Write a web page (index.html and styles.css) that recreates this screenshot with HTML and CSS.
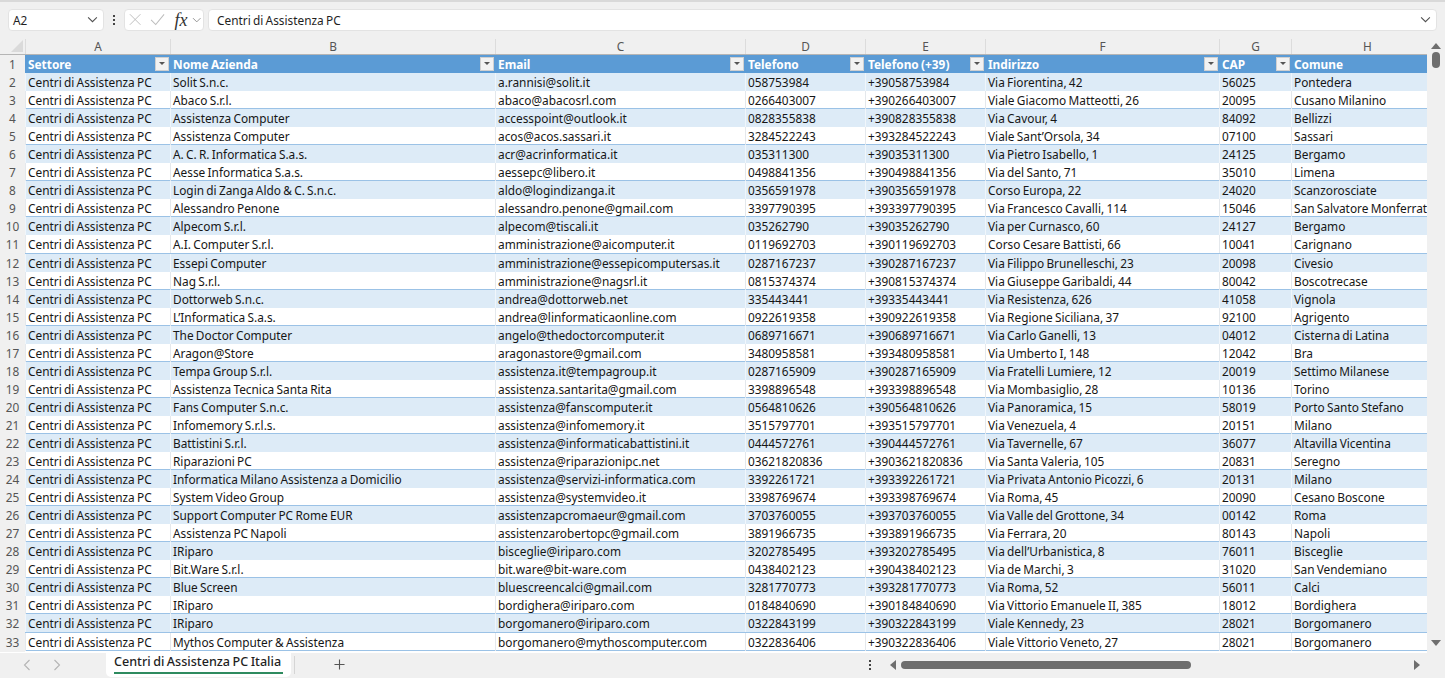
FILE: index.html
```html
<!DOCTYPE html>
<html lang="it">
<head>
    <meta charset="UTF-8">
    <title>Centri di Assistenza PC Italia</title>
    <link rel="stylesheet" href="styles.css">
</head>
<body>
    <div class="formula-bar">
        <div class="name-box">
            <span>A2</span>
            <svg class="chev" viewBox="0 0 12 8"><path d="M1 1.5l5 5 5-5"/></svg>
        </div>
        <div class="dots"><i></i><i></i><i></i></div>
        <div class="fx-box">
            <svg class="fx-icon" viewBox="0 0 14 14"><path d="M1 1l12 12M13 1L1 13"/></svg>
            <svg class="fx-icon" viewBox="0 0 16 14"><path d="M1 7.5l5 5L15 1.5"/></svg>
            <span class="fx">fx</span>
            <svg class="chev small" viewBox="0 0 12 8"><path d="M1 1.5l5 5 5-5"/></svg>
        </div>
        <div class="formula-input">
            <span>Centri di Assistenza PC</span>
            <svg class="chev" viewBox="0 0 12 8"><path d="M1 1.5l5 5 5-5"/></svg>
        </div>
    </div>

    <div class="sheet-area">
        <div class="sheet">
            <div class="col-heads">
                <div class="corner"><svg viewBox="0 0 12 12"><path d="M12 0v12H0z"/></svg></div>
                <div>A</div><div>B</div><div>C</div><div>D</div><div>E</div><div>F</div><div>G</div><div>H</div>
            </div>
            <div class="rows">
                <div class="row head">
                    <div class="num">1</div>
                    <div class="cell">Settore<b class="filter"></b></div>
                    <div class="cell">Nome Azienda<b class="filter"></b></div>
                    <div class="cell">Email<b class="filter"></b></div>
                    <div class="cell">Telefono<b class="filter"></b></div>
                    <div class="cell">Telefono (+39)<b class="filter"></b></div>
                    <div class="cell">Indirizzo<b class="filter"></b></div>
                    <div class="cell">CAP<b class="filter"></b></div>
                    <div class="cell">Comune</div>
                </div>
                <div class="row"><div class="num">2</div><div class="cell">Centri di Assistenza PC</div><div class="cell">Solit S.n.c.</div><div class="cell">a.rannisi@solit.it</div><div class="cell">058753984</div><div class="cell">+39058753984</div><div class="cell">Via Fiorentina, 42</div><div class="cell">56025</div><div class="cell">Pontedera</div></div>
                <div class="row"><div class="num">3</div><div class="cell">Centri di Assistenza PC</div><div class="cell">Abaco S.r.l.</div><div class="cell">abaco@abacosrl.com</div><div class="cell">0266403007</div><div class="cell">+390266403007</div><div class="cell">Viale Giacomo Matteotti, 26</div><div class="cell">20095</div><div class="cell">Cusano Milanino</div></div>
                <div class="row"><div class="num">4</div><div class="cell">Centri di Assistenza PC</div><div class="cell">Assistenza Computer</div><div class="cell">accesspoint@outlook.it</div><div class="cell">0828355838</div><div class="cell">+390828355838</div><div class="cell">Via Cavour, 4</div><div class="cell">84092</div><div class="cell">Bellizzi</div></div>
                <div class="row"><div class="num">5</div><div class="cell">Centri di Assistenza PC</div><div class="cell">Assistenza Computer</div><div class="cell">acos@acos.sassari.it</div><div class="cell">3284522243</div><div class="cell">+393284522243</div><div class="cell">Viale Sant’Orsola, 34</div><div class="cell">07100</div><div class="cell">Sassari</div></div>
                <div class="row"><div class="num">6</div><div class="cell">Centri di Assistenza PC</div><div class="cell">A. C. R. Informatica S.a.s.</div><div class="cell">acr@acrinformatica.it</div><div class="cell">035311300</div><div class="cell">+39035311300</div><div class="cell">Via Pietro Isabello, 1</div><div class="cell">24125</div><div class="cell">Bergamo</div></div>
                <div class="row"><div class="num">7</div><div class="cell">Centri di Assistenza PC</div><div class="cell">Aesse Informatica S.a.s.</div><div class="cell">aessepc@libero.it</div><div class="cell">0498841356</div><div class="cell">+390498841356</div><div class="cell">Via del Santo, 71</div><div class="cell">35010</div><div class="cell">Limena</div></div>
                <div class="row"><div class="num">8</div><div class="cell">Centri di Assistenza PC</div><div class="cell">Login di Zanga Aldo &amp; C. S.n.c.</div><div class="cell">aldo@logindizanga.it</div><div class="cell">0356591978</div><div class="cell">+390356591978</div><div class="cell">Corso Europa, 22</div><div class="cell">24020</div><div class="cell">Scanzorosciate</div></div>
                <div class="row"><div class="num">9</div><div class="cell">Centri di Assistenza PC</div><div class="cell">Alessandro Penone</div><div class="cell">alessandro.penone@gmail.com</div><div class="cell">3397790395</div><div class="cell">+393397790395</div><div class="cell">Via Francesco Cavalli, 114</div><div class="cell">15046</div><div class="cell">San Salvatore Monferrato</div></div>
                <div class="row"><div class="num">10</div><div class="cell">Centri di Assistenza PC</div><div class="cell">Alpecom S.r.l.</div><div class="cell">alpecom@tiscali.it</div><div class="cell">035262790</div><div class="cell">+39035262790</div><div class="cell">Via per Curnasco, 60</div><div class="cell">24127</div><div class="cell">Bergamo</div></div>
                <div class="row"><div class="num">11</div><div class="cell">Centri di Assistenza PC</div><div class="cell">A.I. Computer S.r.l.</div><div class="cell">amministrazione@aicomputer.it</div><div class="cell">0119692703</div><div class="cell">+390119692703</div><div class="cell">Corso Cesare Battisti, 66</div><div class="cell">10041</div><div class="cell">Carignano</div></div>
                <div class="row"><div class="num">12</div><div class="cell">Centri di Assistenza PC</div><div class="cell">Essepi Computer</div><div class="cell">amministrazione@essepicomputersas.it</div><div class="cell">0287167237</div><div class="cell">+390287167237</div><div class="cell">Via Filippo Brunelleschi, 23</div><div class="cell">20098</div><div class="cell">Civesio</div></div>
                <div class="row"><div class="num">13</div><div class="cell">Centri di Assistenza PC</div><div class="cell">Nag S.r.l.</div><div class="cell">amministrazione@nagsrl.it</div><div class="cell">0815374374</div><div class="cell">+390815374374</div><div class="cell">Via Giuseppe Garibaldi, 44</div><div class="cell">80042</div><div class="cell">Boscotrecase</div></div>
                <div class="row"><div class="num">14</div><div class="cell">Centri di Assistenza PC</div><div class="cell">Dottorweb S.n.c.</div><div class="cell">andrea@dottorweb.net</div><div class="cell">335443441</div><div class="cell">+39335443441</div><div class="cell">Via Resistenza, 626</div><div class="cell">41058</div><div class="cell">Vignola</div></div>
                <div class="row"><div class="num">15</div><div class="cell">Centri di Assistenza PC</div><div class="cell">L’Informatica S.a.s.</div><div class="cell">andrea@linformaticaonline.com</div><div class="cell">0922619358</div><div class="cell">+390922619358</div><div class="cell">Via Regione Siciliana, 37</div><div class="cell">92100</div><div class="cell">Agrigento</div></div>
                <div class="row"><div class="num">16</div><div class="cell">Centri di Assistenza PC</div><div class="cell">The Doctor Computer</div><div class="cell">angelo@thedoctorcomputer.it</div><div class="cell">0689716671</div><div class="cell">+390689716671</div><div class="cell">Via Carlo Ganelli, 13</div><div class="cell">04012</div><div class="cell">Cisterna di Latina</div></div>
                <div class="row"><div class="num">17</div><div class="cell">Centri di Assistenza PC</div><div class="cell">Aragon@Store</div><div class="cell">aragonastore@gmail.com</div><div class="cell">3480958581</div><div class="cell">+393480958581</div><div class="cell">Via Umberto I, 148</div><div class="cell">12042</div><div class="cell">Bra</div></div>
                <div class="row"><div class="num">18</div><div class="cell">Centri di Assistenza PC</div><div class="cell">Tempa Group S.r.l.</div><div class="cell">assistenza.it@tempagroup.it</div><div class="cell">0287165909</div><div class="cell">+390287165909</div><div class="cell">Via Fratelli Lumiere, 12</div><div class="cell">20019</div><div class="cell">Settimo Milanese</div></div>
                <div class="row"><div class="num">19</div><div class="cell">Centri di Assistenza PC</div><div class="cell">Assistenza Tecnica Santa Rita</div><div class="cell">assistenza.santarita@gmail.com</div><div class="cell">3398896548</div><div class="cell">+393398896548</div><div class="cell">Via Mombasiglio, 28</div><div class="cell">10136</div><div class="cell">Torino</div></div>
                <div class="row"><div class="num">20</div><div class="cell">Centri di Assistenza PC</div><div class="cell">Fans Computer S.n.c.</div><div class="cell">assistenza@fanscomputer.it</div><div class="cell">0564810626</div><div class="cell">+390564810626</div><div class="cell">Via Panoramica, 15</div><div class="cell">58019</div><div class="cell">Porto Santo Stefano</div></div>
                <div class="row"><div class="num">21</div><div class="cell">Centri di Assistenza PC</div><div class="cell">Infomemory S.r.l.s.</div><div class="cell">assistenza@infomemory.it</div><div class="cell">3515797701</div><div class="cell">+393515797701</div><div class="cell">Via Venezuela, 4</div><div class="cell">20151</div><div class="cell">Milano</div></div>
                <div class="row"><div class="num">22</div><div class="cell">Centri di Assistenza PC</div><div class="cell">Battistini S.r.l.</div><div class="cell">assistenza@informaticabattistini.it</div><div class="cell">0444572761</div><div class="cell">+390444572761</div><div class="cell">Via Tavernelle, 67</div><div class="cell">36077</div><div class="cell">Altavilla Vicentina</div></div>
                <div class="row"><div class="num">23</div><div class="cell">Centri di Assistenza PC</div><div class="cell">Riparazioni PC</div><div class="cell">assistenza@riparazionipc.net</div><div class="cell">03621820836</div><div class="cell">+3903621820836</div><div class="cell">Via Santa Valeria, 105</div><div class="cell">20831</div><div class="cell">Seregno</div></div>
                <div class="row"><div class="num">24</div><div class="cell">Centri di Assistenza PC</div><div class="cell">Informatica Milano Assistenza a Domicilio</div><div class="cell">assistenza@servizi-informatica.com</div><div class="cell">3392261721</div><div class="cell">+393392261721</div><div class="cell">Via Privata Antonio Picozzi, 6</div><div class="cell">20131</div><div class="cell">Milano</div></div>
                <div class="row"><div class="num">25</div><div class="cell">Centri di Assistenza PC</div><div class="cell">System Video Group</div><div class="cell">assistenza@systemvideo.it</div><div class="cell">3398769674</div><div class="cell">+393398769674</div><div class="cell">Via Roma, 45</div><div class="cell">20090</div><div class="cell">Cesano Boscone</div></div>
                <div class="row"><div class="num">26</div><div class="cell">Centri di Assistenza PC</div><div class="cell">Support Computer PC Rome EUR</div><div class="cell">assistenzapcromaeur@gmail.com</div><div class="cell">3703760055</div><div class="cell">+393703760055</div><div class="cell">Via Valle del Grottone, 34</div><div class="cell">00142</div><div class="cell">Roma</div></div>
                <div class="row"><div class="num">27</div><div class="cell">Centri di Assistenza PC</div><div class="cell">Assistenza PC Napoli</div><div class="cell">assistenzarobertopc@gmail.com</div><div class="cell">3891966735</div><div class="cell">+393891966735</div><div class="cell">Via Ferrara, 20</div><div class="cell">80143</div><div class="cell">Napoli</div></div>
                <div class="row"><div class="num">28</div><div class="cell">Centri di Assistenza PC</div><div class="cell">IRiparo</div><div class="cell">bisceglie@iriparo.com</div><div class="cell">3202785495</div><div class="cell">+393202785495</div><div class="cell">Via dell’Urbanistica, 8</div><div class="cell">76011</div><div class="cell">Bisceglie</div></div>
                <div class="row"><div class="num">29</div><div class="cell">Centri di Assistenza PC</div><div class="cell">Bit.Ware S.r.l.</div><div class="cell">bit.ware@bit-ware.com</div><div class="cell">0438402123</div><div class="cell">+390438402123</div><div class="cell">Via de Marchi, 3</div><div class="cell">31020</div><div class="cell">San Vendemiano</div></div>
                <div class="row"><div class="num">30</div><div class="cell">Centri di Assistenza PC</div><div class="cell">Blue Screen</div><div class="cell">bluescreencalci@gmail.com</div><div class="cell">3281770773</div><div class="cell">+393281770773</div><div class="cell">Via Roma, 52</div><div class="cell">56011</div><div class="cell">Calci</div></div>
                <div class="row"><div class="num">31</div><div class="cell">Centri di Assistenza PC</div><div class="cell">IRiparo</div><div class="cell">bordighera@iriparo.com</div><div class="cell">0184840690</div><div class="cell">+390184840690</div><div class="cell">Via Vittorio Emanuele II, 385</div><div class="cell">18012</div><div class="cell">Bordighera</div></div>
                <div class="row"><div class="num">32</div><div class="cell">Centri di Assistenza PC</div><div class="cell">IRiparo</div><div class="cell">borgomanero@iriparo.com</div><div class="cell">0322843199</div><div class="cell">+390322843199</div><div class="cell">Viale Kennedy, 23</div><div class="cell">28021</div><div class="cell">Borgomanero</div></div>
                <div class="row"><div class="num">33</div><div class="cell">Centri di Assistenza PC</div><div class="cell">Mythos Computer &amp; Assistenza</div><div class="cell">borgomanero@mythoscomputer.com</div><div class="cell">0322836406</div><div class="cell">+390322836406</div><div class="cell">Viale Vittorio Veneto, 27</div><div class="cell">28021</div><div class="cell">Borgomanero</div></div>
            </div>
        </div>
        <div class="vscroll">
            <svg viewBox="0 0 10 6"><path d="M5 0l5 6H0z"/></svg>
            <div class="vthumb"></div>
            <div class="vspace"></div>
            <svg viewBox="0 0 10 6"><path d="M0 0h10L5 6z"/></svg>
        </div>
    </div>

    <div class="tabs">
        <div class="tab-nav">
            <svg viewBox="0 0 8 12"><path d="M6.5 1L1.5 6l5 5"/></svg>
            <svg viewBox="0 0 8 12"><path d="M1.5 1l5 5-5 5"/></svg>
        </div>
        <div class="tab"><span>Centri di Assistenza PC Italia</span></div>
        <div class="tab-sep"></div>
        <svg class="plus" viewBox="0 0 12 12"><path d="M6 .5v11M.5 6h11"/></svg>
        <div class="dots bottom"><i></i><i></i><i></i></div>
        <div class="hscroll">
            <svg viewBox="0 0 6 10"><path d="M6 0v10L0 5z"/></svg>
            <div class="hthumb"></div>
            <svg class="right" viewBox="0 0 6 10"><path d="M0 0l6 5-6 5z"/></svg>
        </div>
    </div>
</body>
</html>
```

FILE: styles.css
```css
* {
    box-sizing: border-box;
}

body {
    margin: 0;
    width: 1445px;
    height: 678px;
    overflow: hidden;
    background-color: #f0f0f0;
    font-family: "Noto Sans", sans-serif;
    font-size: 11.85px;
    word-spacing: -0.8px;
    color: #1f1f1f;
}

/* formula bar */
.formula-bar {
    display: flex;
    align-items: center;
    height: 39px;
    padding: 7px 8px 9px;
    border-top: 2px solid #d9d9d9;
}

.name-box,
.fx-box,
.formula-input {
    display: flex;
    align-items: center;
    height: 22px;
    background-color: #fff;
    border: 1px solid #e3e3e3;
    border-radius: 4px;
}

.name-box {
    width: 96px;
    padding: 0 5px 0 4px;
    justify-content: space-between;
}

.fx-box {
    width: 80px;
    padding: 0 2px 0 4px;
}

.formula-input {
    flex: 1;
    margin-left: 4px;
    padding: 0 5px 0 8px;
    justify-content: space-between;
}

.chev {
    width: 11px;
    height: 7px;
    fill: none;
    stroke: #505050;
    stroke-width: 1.2;
}

.chev.small {
    width: 10px;
    height: 6px;
    stroke: #8a8a8a;
}

.dots {
    display: flex;
    flex-direction: column;
    gap: 2px;
    width: 20px;
    align-items: center;
}

.dots i {
    width: 2px;
    height: 2px;
    background-color: #444;
}

.fx-icon {
    width: 13px;
    height: 13px;
    margin-right: 9px;
    fill: none;
    stroke: #bdbdbd;
    stroke-width: 1.1;
}

.fx-icon + .fx-icon {
    width: 16px;
    margin-right: 9px;
}

.fx {
    width: 18px;
    font-family: "Liberation Serif", serif;
    font-style: italic;
    font-size: 18px;
    line-height: 20px;
    color: #333;
}

/* grid */
.sheet-area {
    display: flex;
    height: 614px;
}

.sheet {
    width: 1427px;
    background-color: #fff;
}

.col-heads {
    display: grid;
    grid-template-columns: 25px 145px 325px 250px 120px 120px 234px 72px 152px;
    height: 16px;
    overflow: hidden;
    background-color: #f0f0f0;
    border-bottom: 1px solid #b5b5b5;
}

.col-heads div {
    text-align: center;
    line-height: 14px;
    color: #555;
    border-left: 1px solid #dcdcdc;
}

.col-heads .corner {
    border: 0;
    padding: 1px 1px 0 11px;
}

.corner svg {
    display: block;
    width: 12px;
    height: 12px;
    fill: #dadada;
}

.row {
    display: grid;
    grid-template-columns: 25px 145px 325px 250px 120px 120px 234px 72px 136px;
    height: 18.06px;
    line-height: 19px;
    border-bottom: 1px solid #9bc2e6;
    color: #161616;
}

.row:nth-child(even) .cell {
    background-color: #ddebf7;
}

.row .num {
    margin-bottom: -1px;
    background-color: #f0f0f0;
    border-bottom: 0;
    text-align: center;
    color: #555;
}

.cell {
    position: relative;
    padding-left: 2px;
    white-space: nowrap;
    overflow: hidden;
    border-left: 1px solid #e4e8ec;
}

.row:nth-child(even) .cell {
    border-left-color: #f0f6fb;
}

.row.head {
    border-bottom: 0;
}

.row.head .cell {
    background-color: #5b9bd5;
    border-left: 0;
    padding-left: 3px;
    color: #fff;
    font-weight: 700;
}

.row.head .num {
    margin-bottom: 0;
}

.filter {
    position: absolute;
    top: 2px;
    right: 1px;
    width: 14px;
    height: 14px;
    background-color: #f2f2f2;
    border: 1px solid #d0d0d0;
}

.filter::after {
    content: "";
    position: absolute;
    left: 3px;
    top: 4px;
    border-left: 3px solid transparent;
    border-right: 3px solid transparent;
    border-top: 3px solid #555;
}

/* scrollbars */
.vscroll {
    display: flex;
    flex-direction: column;
    align-items: center;
    width: 18px;
    padding-top: 4px;
}

.vscroll svg {
    width: 10px;
    height: 6px;
    fill: #6e6e6e;
}

.vthumb {
    width: 8px;
    height: 16px;
    margin-top: 3px;
    background-color: #6e6e6e;
    border-radius: 4px;
}

.vspace {
    flex: 1;
}

.vscroll svg:last-child {
    margin-bottom: 7px;
}

/* sheet tabs */
.tabs {
    display: flex;
    align-items: center;
    height: 25px;
    margin-top: -1px;
}

.tab-nav {
    display: flex;
    gap: 22px;
    width: 106px;
    padding-left: 23px;
}

.tab-nav svg {
    width: 8px;
    height: 12px;
    fill: none;
    stroke: #b4b4b4;
    stroke-width: 1.1;
}

.tab {
    align-self: flex-start;
    width: 185px;
    height: 25px;
    padding: 0 8px;
    background-color: #fff;
    border-radius: 0 0 5px 5px;
}

.tab span {
    display: block;
    height: 22px;
    line-height: 20px;
    font-size: 12.6px;
    font-weight: 500;
    white-space: nowrap;
    border-bottom: 2px solid #2e8b5f;
}

.tab-sep {
    width: 1px;
    height: 18px;
    margin-left: 3px;
    background-color: #d5d5d5;
}

.plus {
    width: 11px;
    height: 11px;
    margin-left: 39px;
    fill: none;
    stroke: #555;
    stroke-width: 1.2;
}

.dots.bottom {
    margin-left: 515px;
}

.hscroll {
    display: flex;
    align-items: center;
    width: 540px;
    height: 16px;
    margin-left: 4px;
    padding: 0 4px 0 6px;
}

.hscroll svg {
    width: 6px;
    height: 10px;
    fill: #6e6e6e;
}

.hthumb {
    width: 290px;
    height: 8px;
    margin-left: 5px;
    background-color: #6e6e6e;
    border-radius: 4px;
}

.hscroll .right {
    margin-left: auto;
}
```
